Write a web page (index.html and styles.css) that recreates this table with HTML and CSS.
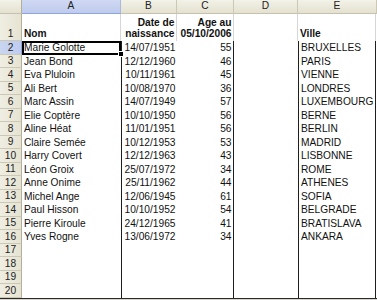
FILE: index.html
```html
<!DOCTYPE html>
<html lang="fr">
<head>
<meta charset="utf-8">
<title>Feuille</title>
<link rel="stylesheet" href="styles.css">
</head>
<body>
<div class="sheet">
  <div class="corner"></div>
  <div class="ch sel">A</div>
  <div class="ch">B</div>
  <div class="ch">C</div>
  <div class="ch">D</div>
  <div class="ch">E</div>

  <div class="rh">1</div>
  <div class="c h1 b">Nom</div>
  <div class="c h1 b r">Date de<br>naissance</div>
  <div class="c h1 b r">Age au<br>05/10/2006</div>
  <div class="c h1"></div>
  <div class="c h1 b lastcol">Ville</div>

  <div class="rh rsel">2</div>
  <div class="c active">Marie Golotte</div>
  <div class="c r colb">14/07/1951</div>
  <div class="c r colc">55</div>
  <div class="c"></div>
  <div class="c cole">BRUXELLES</div>

  <div class="rh">3</div>
  <div class="c">Jean Bond</div>
  <div class="c r colb">12/12/1960</div>
  <div class="c r colc">46</div>
  <div class="c"></div>
  <div class="c cole">PARIS</div>

  <div class="rh">4</div>
  <div class="c">Eva Pluloin</div>
  <div class="c r colb">10/11/1961</div>
  <div class="c r colc">45</div>
  <div class="c"></div>
  <div class="c cole">VIENNE</div>

  <div class="rh">5</div>
  <div class="c">Ali Bert</div>
  <div class="c r colb">10/08/1970</div>
  <div class="c r colc">36</div>
  <div class="c"></div>
  <div class="c cole">LONDRES</div>

  <div class="rh">6</div>
  <div class="c">Marc Assin</div>
  <div class="c r colb">14/07/1949</div>
  <div class="c r colc">57</div>
  <div class="c"></div>
  <div class="c cole">LUXEMBOURG</div>

  <div class="rh">7</div>
  <div class="c">Elie Coptère</div>
  <div class="c r colb">10/10/1950</div>
  <div class="c r colc">56</div>
  <div class="c"></div>
  <div class="c cole">BERNE</div>

  <div class="rh">8</div>
  <div class="c">Aline Héat</div>
  <div class="c r colb">11/01/1951</div>
  <div class="c r colc">56</div>
  <div class="c"></div>
  <div class="c cole">BERLIN</div>

  <div class="rh">9</div>
  <div class="c">Claire Semée</div>
  <div class="c r colb">10/12/1953</div>
  <div class="c r colc">53</div>
  <div class="c"></div>
  <div class="c cole">MADRID</div>

  <div class="rh">10</div>
  <div class="c">Harry Covert</div>
  <div class="c r colb">12/12/1963</div>
  <div class="c r colc">43</div>
  <div class="c"></div>
  <div class="c cole">LISBONNE</div>

  <div class="rh">11</div>
  <div class="c">Léon Groix</div>
  <div class="c r colb">25/07/1972</div>
  <div class="c r colc">34</div>
  <div class="c"></div>
  <div class="c cole">ROME</div>

  <div class="rh">12</div>
  <div class="c">Anne Onime</div>
  <div class="c r colb">25/11/1962</div>
  <div class="c r colc">44</div>
  <div class="c"></div>
  <div class="c cole">ATHENES</div>

  <div class="rh">13</div>
  <div class="c">Michel Ange</div>
  <div class="c r colb">12/06/1945</div>
  <div class="c r colc">61</div>
  <div class="c"></div>
  <div class="c cole">SOFIA</div>

  <div class="rh">14</div>
  <div class="c">Paul Hisson</div>
  <div class="c r colb">10/10/1952</div>
  <div class="c r colc">54</div>
  <div class="c"></div>
  <div class="c cole">BELGRADE</div>

  <div class="rh">15</div>
  <div class="c">Pierre Kiroule</div>
  <div class="c r colb">24/12/1965</div>
  <div class="c r colc">41</div>
  <div class="c"></div>
  <div class="c cole">BRATISLAVA</div>

  <div class="rh">16</div>
  <div class="c">Yves Rogne</div>
  <div class="c r colb">13/06/1972</div>
  <div class="c r colc">34</div>
  <div class="c"></div>
  <div class="c cole">ANKARA</div>

  <div class="rh">17</div>
  <div class="c"></div>
  <div class="c colb"></div>
  <div class="c colc"></div>
  <div class="c"></div>
  <div class="c cole"></div>

  <div class="rh">18</div>
  <div class="c"></div>
  <div class="c colb"></div>
  <div class="c colc"></div>
  <div class="c"></div>
  <div class="c cole"></div>

  <div class="rh">19</div>
  <div class="c"></div>
  <div class="c colb"></div>
  <div class="c colc"></div>
  <div class="c"></div>
  <div class="c cole"></div>

  <div class="rh">20</div>
  <div class="c"></div>
  <div class="c colb"></div>
  <div class="c colc"></div>
  <div class="c"></div>
  <div class="c cole"></div>

  <div class="foot"></div>
</div>
</body>
</html>
```

FILE: styles.css
```css
html, body {
  margin: 0;
  padding: 0;
  background: #ffffff;
  overflow: hidden;
}

.sheet {
  width: 377px;
  height: 300px;
  display: grid;
  grid-template-columns: 22px 99px 56px 57px 64px 79px;
  grid-template-rows: 13.5px 27.5px repeat(19, 13.5px) 2.5px;
  font-family: "Liberation Sans", Arial, sans-serif;
  font-size: 10.2px;
  color: #000;
}

.corner,
.ch {
  box-sizing: border-box;
  background: linear-gradient(#f3f2e8, #e4e1d0);
  border-bottom: 1px solid #c5c2b0;
  border-right: 1px solid #cbc8b6;
  text-align: center;
  line-height: 12.5px;
  color: #222;
}

.corner {
  border-right: 1px solid #b3af9b;
}

.ch.sel {
  background: linear-gradient(#cfd9f3, #bfcbee);
  border-bottom: 1px solid #8fa5d6;
  border-right: 1px solid #a9b8dc;
}

.rh {
  box-sizing: border-box;
  background: linear-gradient(90deg, #efeee2, #e6e3d2);
  border-bottom: 1px solid #cbc8b6;
  border-right: 1px solid #b3af9b;
  line-height: 13px;
  color: #222;
  display: flex;
  align-items: flex-end;
  justify-content: center;
}

.rh.rsel {
  background: linear-gradient(90deg, #cad5f0, #bfcbee);
  border-right: 1px solid #8fa5d6;
}

.c {
  box-sizing: border-box;
  min-width: 0;
  padding: 0 2px;
  line-height: 13.5px;
  white-space: nowrap;
  position: relative;
  color: #111;
}

.c.r {
  text-align: right;
  padding-right: 1.5px;
}

.c.b {
  font-weight: bold;
}

.c.h1 {
  display: flex;
  flex-direction: column;
  justify-content: flex-end;
  line-height: 11.5px;
  padding-bottom: 1.5px;
  border-right: 1px solid #d6d6d6;
}

.c.h1.r {
  align-items: flex-end;
}

.c.h1.lastcol,
.cole {
  margin-right: 1px;
}

.colb {
  border-left: 1px solid #1e1e1e;
}

.colc {
  border-right: 1px solid #1e1e1e;
}

.cole {
  border-left: 1px solid #1e1e1e;
  border-right: 1px solid #1e1e1e;
}

.active {
  box-shadow: inset 0 0 0 2px #000;
}

.active::after {
  content: "";
  position: absolute;
  right: -3px;
  bottom: -2px;
  width: 4px;
  height: 4px;
  background: #000;
  border: 1px solid #fff;
  z-index: 2;
}

.foot {
  grid-column: 1 / -1;
  border-top: 1px solid #2a2a2a;
  background: #d8d6cc;
}
```
